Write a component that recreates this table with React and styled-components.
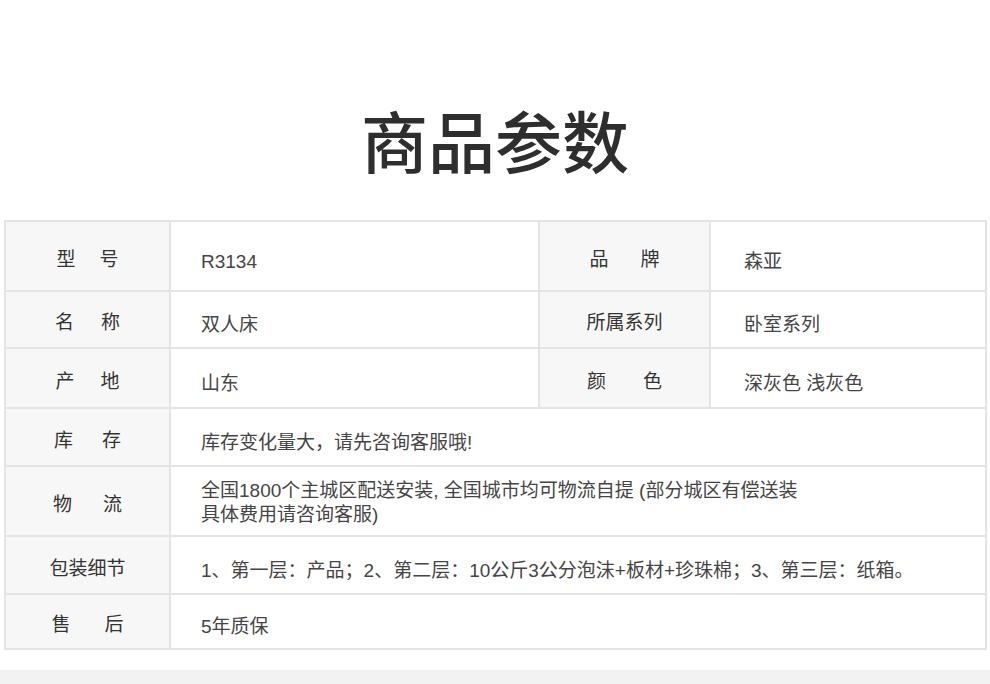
import React from 'react'
import styled, { createGlobalStyle } from 'styled-components'

const Global = createGlobalStyle`
  html, body {
    margin: 0;
    padding: 0;
    background: #fff;
  }
  body {
    font-family: "Liberation Sans", "Noto Sans CJK SC", sans-serif;
  }
`

const Page = styled.div`
  width: 990px;
  height: 684px;
  display: flex;
  flex-direction: column;
  overflow: hidden;
`

const Title = styled.h1`
  margin: 106px 0 48px;
  font-family: "Noto Sans CJK SC", sans-serif;
  font-size: 67px;
  line-height: 66px;
  font-weight: 500;
  color: #2e2e2e;
  text-align: center;
`

const Spec = styled.div`
  margin: 0 3px 0 4px;
  display: grid;
  grid-template-columns: 165px 369px 171px 1fr;
  grid-template-rows: 70px 57px 60px 58px 70px 58px 55px;
  border-top: 2px solid #e4e4e4;
  border-left: 2px solid #e4e4e4;
  box-sizing: border-box;
`

const Cell = styled.div`
  box-sizing: border-box;
  border-right: 2px solid #e4e4e4;
  border-bottom: 2px solid #e4e4e4;
  display: flex;
  align-items: center;
  font-size: 19px;
`

const Label = styled(Cell)`
  background: #f7f7f7;
  justify-content: center;
  gap: ${p => p.$spread || 0}px;
  padding-top: 2px;
  color: #333;
`

const Value = styled(Cell)`
  grid-column: span ${p => p.$span || 1};
  padding-left: ${p => p.$indent || 30}px;
  padding-top: ${p => p.$top ?? 11}px;
  color: #454545;
  line-height: ${p => p.$lh || 24}px;
`

const Band = styled.div`
  margin-top: 20px;
  flex: 1;
  background: #f2f2f2;
`

const Name = ({ text, spread }) => (
  <Label $spread={spread}>
    {spread ? text.split('').map((c, i) => <span key={i}>{c}</span>) : text}
  </Label>
)

export default function App() {
  return (
    <Page>
      <Global />
      <Title>商品参数</Title>
      <Spec>
        <Name text="型号" spread={24} />
        <Value>R3134</Value>
        <Name text="品牌" spread={32} />
        <Value $indent={33}>森亚</Value>

        <Name text="名称" spread={27} />
        <Value>双人床</Value>
        <Name text="所属系列" />
        <Value $indent={33}>卧室系列</Value>

        <Name text="产地" spread={26} />
        <Value>山东</Value>
        <Name text="颜色" spread={37} />
        <Value $indent={33}>深灰色 浅灰色</Value>

        <Name text="库存" spread={29} />
        <Value $span={3}>库存变化量大，请先咨询客服哦!</Value>

        <Name text="物流" spread={31} />
        <Value $span={3} $top={4} $lh={24}>
          全国1800个主城区配送安装, 全国城市均可物流自提 (部分城区有偿送装
          <br />
          具体费用请咨询客服)
        </Value>

        <Name text="包装细节" />
        <Value $span={3}>1、第一层：产品；2、第二层：10公斤3公分泡沫+板材+珍珠棉；3、第三层：纸箱。</Value>

        <Name text="售后" spread={34} />
        <Value $span={3}>5年质保</Value>
      </Spec>
      <Band />
    </Page>
  )
}
